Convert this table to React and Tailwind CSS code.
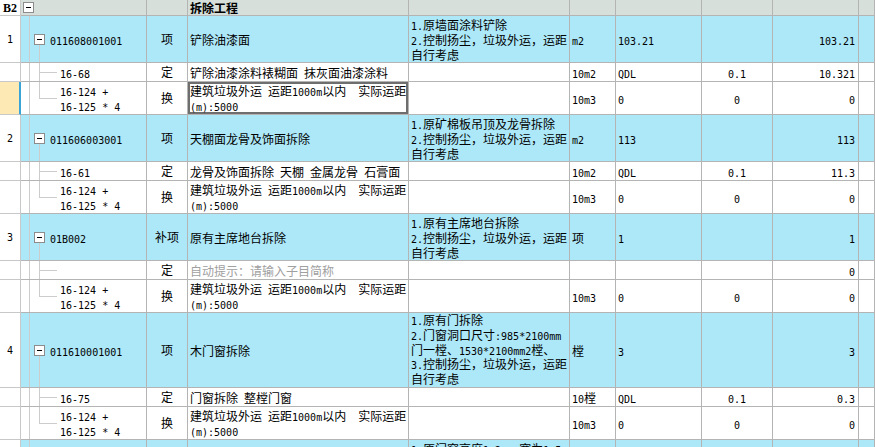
import React from "react";

const GRID =
  "grid grid-cols-[21px_126px_41px_221px_161px_46px_86px_71px_86px_1fr]";
const CELL = "border-r border-b border-[#b4b4b4] flex items-center overflow-hidden";

function Txt({ s }) {
  if (!s) return null;
  const parts = s.split(/([\x20-\x7e]+)/);
  return parts.map((p, i) =>
    /^[\x20-\x7e]+$/.test(p) ? (
      <span
        key={i}
        className="font-['DejaVu_Sans_Mono',monospace] text-[10px] leading-none whitespace-pre"
      >
        {p}
      </span>
    ) : (
      <React.Fragment key={i}>{p}</React.Fragment>
    )
  );
}

function Lines({ lines, tight }) {
  return (
    <div>
      {lines.map((l, i) => (
        <div
          key={i}
          className={
            "whitespace-nowrap overflow-visible " +
            (tight ? "h-[14.8px] leading-[14.8px]" : "h-[15px] leading-[15px]")
          }
        >
          <Txt s={l} />
        </div>
      ))}
    </div>
  );
}

function MinusBox() {
  return (
    <div className="w-[11px] h-[11px] border border-[#8c8c8c] bg-white flex items-center justify-center shrink-0">
      <div className="w-[5px] h-px bg-black" />
    </div>
  );
}

function RootLine() {
  return <div className="w-[9px] self-stretch border-r border-[#cccccc] shrink-0" />;
}

function ItemTree({ code }) {
  return (
    <>
      <RootLine />
      <div className="ml-[4px] w-[11px] self-stretch flex flex-col shrink-0">
        <div className="flex-1" />
        <MinusBox />
        <div className="flex-1 ml-[5px] border-l border-[#cccccc]" />
      </div>
      <div className="ml-[5px] h-[15px] leading-[15px] whitespace-nowrap">
        <Txt s={code} />
      </div>
    </>
  );
}

function ChildTree({ code, last }) {
  return (
    <>
      <RootLine />
      <div className="ml-[9px] w-[18px] self-stretch flex flex-col shrink-0">
        <div className="flex-1 border-l border-b border-[#cccccc]" />
        <div className={"flex-1 " + (last ? "" : "border-l border-[#cccccc]")} />
      </div>
      <div className="ml-[3px]">
        <Lines lines={code} />
      </div>
    </>
  );
}

function ItemRow({ g }) {
  const bg = "bg-[#ade8f8]";
  return (
    <div className={GRID + " " + g.h}>
      <div className="border-r border-b border-[#c8c8c8] flex items-center justify-center bg-white">
        <span className="font-['DejaVu_Sans_Mono',monospace] text-[10px]">{g.num}</span>
      </div>
      <div className={CELL + " " + bg + " items-stretch"}>
        <div className="flex items-center w-full">
          <ItemTree code={g.code} />
        </div>
      </div>
      <div className={CELL + " " + bg + " justify-center"}>{g.type}</div>
      <div className={CELL + " " + bg + " pl-[2px]"}>
        <Lines lines={[g.name]} />
      </div>
      <div className={CELL + " " + bg + " pl-[2px]"}>
        <Lines lines={g.desc} tight={g.desc.length > 4} />
      </div>
      <div className={CELL + " " + bg + " pl-[2px]"}>
        <Lines lines={[g.unit]} />
      </div>
      <div className={CELL + " " + bg + " pl-[2px]"}>
        <Lines lines={[g.qty]} />
      </div>
      <div className={CELL + " " + bg} />
      <div className={CELL + " " + bg + " justify-end pr-[3px]"}>
        <Lines lines={[g.total]} />
      </div>
      <div className={CELL + " " + bg} />
    </div>
  );
}

function ChildRow({ c, last, selected }) {
  return (
    <div className={GRID + " " + c.h}>
      <div
        className={
          "border-b border-[#c8c8c8] " +
          (selected
            ? "bg-[#fde9b4] border-r-2 border-r-[#3aa3d8]"
            : "bg-white border-r")
        }
      />
      <div className={CELL + " bg-white items-stretch"}>
        <div className="flex items-center w-full">
          <ChildTree code={c.code} last={last} />
        </div>
      </div>
      <div className={CELL + " bg-white justify-center"}>{c.type}</div>
      <div
        className={
          CELL +
          " bg-white pl-[2px] " +
          (selected ? "shadow-[inset_0_0_0_2px_#6e6e6e]" : "") +
          (c.hint ? " text-[#a0a0a0]" : "")
        }
      >
        <Lines lines={c.name} />
      </div>
      <div className={CELL + " bg-white"} />
      <div className={CELL + " bg-white pl-[2px]"}>
        <Lines lines={[c.unit]} />
      </div>
      <div className={CELL + " bg-white pl-[2px]"}>
        <Lines lines={[c.qty]} />
      </div>
      <div className={CELL + " bg-white justify-center"}>
        <Lines lines={[c.coef]} />
      </div>
      <div className={CELL + " bg-white justify-end pr-[3px]"}>
        <Lines lines={[c.total]} />
      </div>
      <div className={CELL + " bg-white"} />
    </div>
  );
}

const HUAN = {
  h: "h-[33px]",
  code: ["16-124 +", "16-125 * 4"],
  type: "换",
  name: ["建筑垃圾外运 运距1000m以内　实际运距", "(m):5000"],
  unit: "10m3",
  qty: "0",
  coef: "0",
  total: "0",
};

const groups = [
  {
    num: "1",
    h: "h-[47px]",
    code: "011608001001",
    type: "项",
    name: "铲除油漆面",
    desc: ["1.原墙面涂料铲除", "2.控制扬尘，垃圾外运，运距", "自行考虑"],
    unit: "m2",
    qty: "103.21",
    total: "103.21",
    children: [
      {
        h: "h-[19px]",
        code: ["16-68"],
        type: "定",
        name: ["铲除油漆涂料裱糊面 抹灰面油漆涂料"],
        unit: "10m2",
        qty: "QDL",
        coef: "0.1",
        total: "10.321",
      },
      { ...HUAN, selected: true },
    ],
  },
  {
    num: "2",
    h: "h-[47px]",
    code: "011606003001",
    type: "项",
    name: "天棚面龙骨及饰面拆除",
    desc: ["1.原矿棉板吊顶及龙骨拆除", "2.控制扬尘，垃圾外运，运距", "自行考虑"],
    unit: "m2",
    qty: "113",
    total: "113",
    children: [
      {
        h: "h-[19px]",
        code: ["16-61"],
        type: "定",
        name: ["龙骨及饰面拆除 天棚 金属龙骨 石膏面"],
        unit: "10m2",
        qty: "QDL",
        coef: "0.1",
        total: "11.3",
      },
      HUAN,
    ],
  },
  {
    num: "3",
    h: "h-[47px]",
    code: "01B002",
    type: "补项",
    name: "原有主席地台拆除",
    desc: ["1.原有主席地台拆除", "2.控制扬尘，垃圾外运，运距", "自行考虑"],
    unit: "项",
    qty: "1",
    total: "1",
    children: [
      {
        h: "h-[19px]",
        code: [""],
        type: "定",
        name: ["自动提示：请输入子目简称"],
        hint: true,
        unit: "",
        qty: "",
        coef: "",
        total: "0",
      },
      HUAN,
    ],
  },
  {
    num: "4",
    h: "h-[75px]",
    code: "011610001001",
    type: "项",
    name: "木门窗拆除",
    desc: [
      "1.原有门拆除",
      "2.门窗洞口尺寸:985*2100mm",
      "门一樘、1530*2100mm2樘、",
      "3.控制扬尘，垃圾外运，运距",
      "自行考虑",
    ],
    unit: "樘",
    qty: "3",
    total: "3",
    children: [
      {
        h: "h-[19px]",
        code: ["16-75"],
        type: "定",
        name: ["门窗拆除 整樘门窗"],
        unit: "10樘",
        qty: "QDL",
        coef: "0.1",
        total: "0.3",
      },
      HUAN,
    ],
  },
];

export default function App() {
  return (
    <div className="w-[875px] h-[447px] overflow-hidden bg-white text-black text-[12px] font-['Noto_Sans_CJK_SC',sans-serif]">
      <div className={GRID + " h-[16px]"}>
        <div className="border-r border-b border-[#c8c8c8] bg-white flex items-center justify-center font-['Liberation_Serif',serif] font-bold text-[12px] leading-none">
          B2
        </div>
        <div className={CELL + " bg-[#d6dfda] pl-[2px]"}>
          <MinusBox />
        </div>
        <div className={CELL + " bg-[#d6dfda]"} />
        <div className={CELL + " bg-[#d6dfda] pl-[2px] font-bold leading-none"}>拆除工程</div>
        <div className={CELL + " bg-[#d6dfda]"} />
        <div className={CELL + " bg-[#d6dfda]"} />
        <div className={CELL + " bg-[#d6dfda]"} />
        <div className={CELL + " bg-[#d6dfda]"} />
        <div className={CELL + " bg-[#d6dfda]"} />
        <div className={CELL + " bg-[#d6dfda]"} />
      </div>
      {groups.map((g, gi) => (
        <React.Fragment key={gi}>
          <ItemRow g={g} />
          {g.children.map((c, ci) => (
            <ChildRow
              key={ci}
              c={c}
              last={ci === g.children.length - 1}
              selected={!!c.selected}
            />
          ))}
        </React.Fragment>
      ))}
      <ItemRow
        g={{
          num: "5",
          h: "h-[47px]",
          code: "011610002001",
          type: "项",
          name: "铝合金窗拆除",
          desc: ["1.原门窗高度1.2m，宽为1.5m", "2.控制扬尘，垃圾外运，运距", "自行考虑"],
          unit: "樘",
          qty: "2",
          total: "2",
        }}
      />
    </div>
  );
}
